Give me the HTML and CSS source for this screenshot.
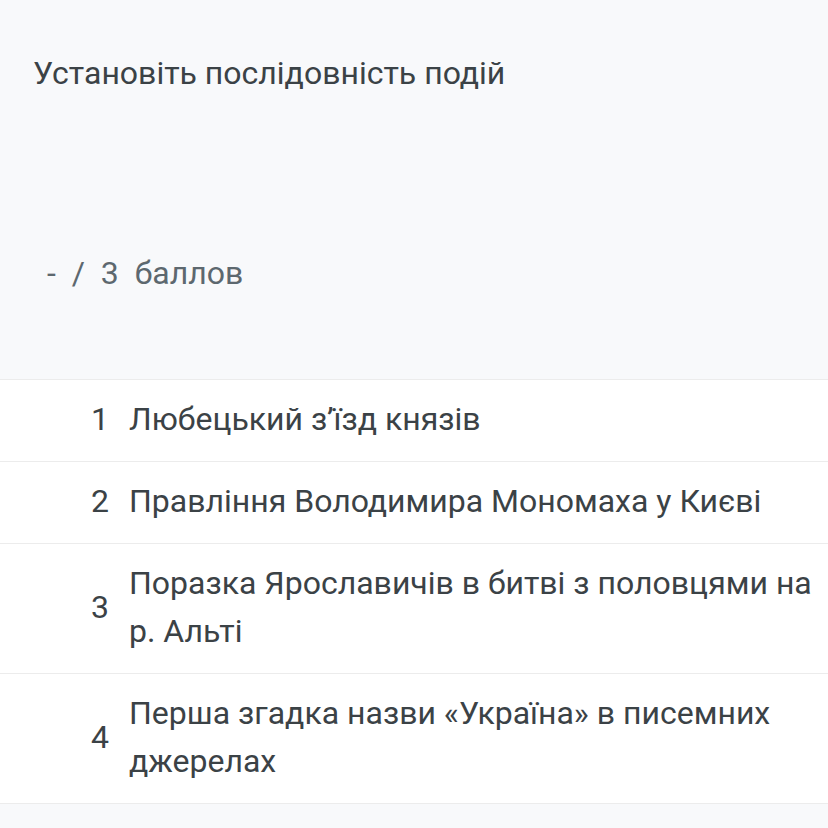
FILE: index.html
```html
<!DOCTYPE html>
<html lang="uk">
<head>
  <meta charset="UTF-8">
  <title>Послідовність подій</title>
  <link rel="stylesheet" href="styles.css">
</head>
<body>
  <div class="question">
    <h1 class="question-title">Установіть послідовність подій</h1>
    <p class="score">- &nbsp;/ &nbsp;3 &nbsp;баллов</p>
  </div>

  <ul class="events">
    <li class="event"><span class="num">1</span><span class="text">Любецький з’їзд князів</span></li>
    <li class="event"><span class="num">2</span><span class="text">Правління Володимира Мономаха у Києві</span></li>
    <li class="event"><span class="num">3</span><span class="text">Поразка Ярославичів в битві з половцями на р. Альті</span></li>
    <li class="event"><span class="num">4</span><span class="text">Перша згадка назви «Україна» в писемних джерелах</span></li>
  </ul>
</body>
</html>
```

FILE: styles.css
```css
body {
  margin: 0;
  font-family: Roboto, 'Noto Sans', sans-serif;
  background-color: #f8f9fb;
  color: #3b4246;
}
.question {
  padding: 52px 33px 0;
  height: 327px;
}
.question-title {
  margin: 0;
  font-size: 32px;
  font-weight: 400;
  line-height: 42px;
}
.score {
  margin: 158px 0 0 14px;
  font-size: 32px;
  line-height: 42px;
  color: #5d686f;
}
.events {
  list-style: none;
  margin: 0;
  padding: 0;
  background: white;
  border-top: 1px solid #ececec;
}
.event {
  display: flex;
  align-items: center;
  border-bottom: 1px solid #ececec;
  padding: 15px 0 18px;
  font-size: 32px;
  line-height: 48px;
}
.num {
  width: 129px;
  flex-shrink: 0;
  text-align: right;
  padding-right: 20px;
  box-sizing: border-box;
}
.text {
  padding-right: 12px;
}
```
